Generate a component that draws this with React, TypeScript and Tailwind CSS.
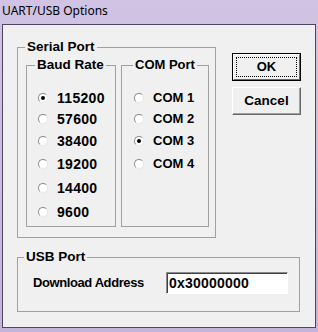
import React from "react";

const font = { fontFamily: '"Liberation Sans", Arial, sans-serif' };

function Radio({ checked, label, digits, className = "" }: { checked?: boolean; label: string; digits?: boolean; className?: string }) {
  return (
    <div className={"flex h-[20px] items-center " + className}>
      <div className="flex h-[10px] w-[10px] items-center justify-center rounded-full border border-t-[#8a8a8a] border-l-[#8a8a8a] border-r-[#e6e6e6] border-b-[#e6e6e6] bg-white">
        {checked ? <div className="h-[4px] w-[4px] rounded-full bg-black" /> : null}
      </div>
      <span className={"ml-[9px] font-bold text-black leading-[16px] " + (digits ? "text-[14px] tracking-[0.3px]" : "text-[13px]")}>{label}</span>
    </div>
  );
}

export default function App() {
  return (
    <div className="flex h-[332px] w-[318px] flex-col bg-gradient-to-b from-[#d0c3e4] to-[#c4b4dc]" style={font}>
      <div className="flex h-[24px] items-center pl-[2px] pb-[2px] text-[12px] text-black" style={{ fontFamily: '"Noto Sans", "Liberation Sans", sans-serif' }}>
        UART/USB Options
      </div>
      <div className="ml-[2px] h-[304px] w-[314px] border border-[#4e4660] bg-[#f0f0f0] pl-[14px] pt-[14px]">
        <div className="flex items-start">
          <fieldset className="h-[199px] w-[199px] border border-[#a0a0a0]">
            <legend className="ml-[7px] px-[2px] text-[13.5px] font-bold leading-[16px] text-black">Serial Port</legend>
            <div className="flex pl-[8px] pt-[2px]">
              <fieldset className="h-[170px] w-[90px] border border-[#a0a0a0]">
                <legend className="ml-[8px] px-[2px] text-[13.5px] font-bold leading-[16px] text-black">Baud Rate</legend>
                <div className="flex flex-col pl-[11px] pt-[15px]">
                  <Radio checked label="115200" digits />
                  <Radio label="57600" digits className="mt-[1px]" />
                  <Radio label="38400" digits className="mt-[2px]" />
                  <Radio label="19200" digits className="mt-[3px]" />
                  <Radio label="14400" digits className="mt-[4px]" />
                  <Radio label="9600" digits className="mt-[4px]" />
                </div>
              </fieldset>
              <fieldset className="ml-[5px] h-[170px] w-[88px] border border-[#a0a0a0]">
                <legend className="ml-[11px] px-[2px] text-[13px] font-bold leading-[16px] text-black">COM Port</legend>
                <div className="flex flex-col pl-[12px] pt-[15px]">
                  <Radio label="COM 1" />
                  <Radio label="COM 2" className="mt-[1px]" />
                  <Radio checked label="COM 3" className="mt-[2px]" />
                  <Radio label="COM 4" className="mt-[3px]" />
                </div>
              </fieldset>
            </div>
          </fieldset>
          <div className="ml-[16px] mt-[14px] flex w-[69px] flex-col">
            <div className="h-[28px] w-[69px] border border-black">
              <div className="flex h-full w-full items-center justify-center border border-t-white border-l-white border-r-[#696969] border-b-[#696969] bg-[#f0f0f0] p-[2px]">
                <div className="flex h-full w-full items-center justify-center border border-dotted border-black text-[13px] font-bold text-black">
                  OK
                </div>
              </div>
            </div>
            <div className="mt-[6px] flex h-[28px] w-[69px] items-center justify-center border border-t-white border-l-white border-r-[#696969] border-b-[#696969] bg-[#f0f0f0] text-[13.5px] font-bold text-black shadow-[inset_-1px_-1px_0_#a0a0a0]">
              Cancel
            </div>
          </div>
        </div>
        <fieldset className="mt-[11px] h-[63px] w-[283px] border border-[#a0a0a0]">
          <legend className="ml-[6px] px-[2px] text-[13.5px] font-bold leading-[16px] text-black">USB Port</legend>
          <div className="flex items-center justify-between pl-[15px] pr-[11px] pt-[7px]">
            <span className="text-[13px] font-bold tracking-[-0.4px] text-black">Download Address</span>
            <div className="flex h-[22px] w-[122px] items-center border border-t-[#8a8a8a] border-l-[#8a8a8a] border-r-white border-b-white bg-white pl-[2px] shadow-[inset_1px_1px_0_#404040]">
              <span className="text-[14px] font-bold tracking-[0.2px] text-black">0x30000000</span>
            </div>
          </div>
        </fieldset>
      </div>
    </div>
  );
}
